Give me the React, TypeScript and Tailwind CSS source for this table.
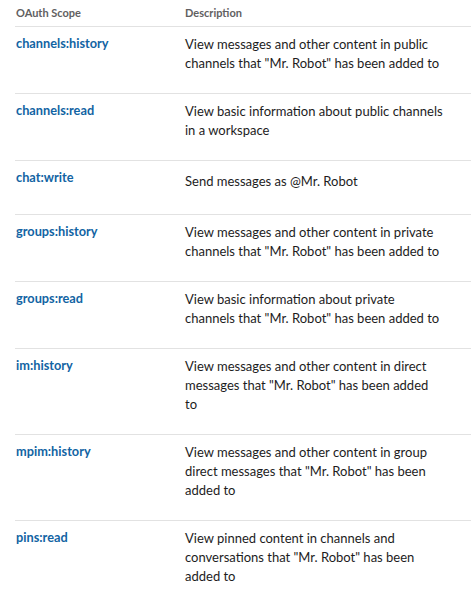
import React from "react";

const scopes = [
  { name: "channels:history", desc: 'View messages and other content in public channels that "Mr. Robot" has been added to' },
  { name: "channels:read", desc: "View basic information about public channels in a workspace" },
  { name: "chat:write", desc: "Send messages as @Mr. Robot" },
  { name: "groups:history", desc: 'View messages and other content in private channels that "Mr. Robot" has been added to' },
  { name: "groups:read", desc: 'View basic information about private channels that "Mr. Robot" has been added to' },
  { name: "im:history", desc: 'View messages and other content in direct messages that "Mr. Robot" has been added\nto' },
  { name: "mpim:history", desc: 'View messages and other content in group direct messages that "Mr. Robot" has been added to' },
  { name: "pins:read", desc: 'View pinned content in channels and conversations that "Mr. Robot" has been added to' },
];

const App: React.FC = () => {
  return (
    <div className="min-h-screen bg-white pl-[15px] font-['Lato','Liberation_Sans',sans-serif] text-[#1d1c1d]">
      <div className="flex h-[27px] items-center border-b border-[#e2e2e2] text-[11px] font-bold text-[#616061]">
        <div className="w-[170px] pl-px">OAuth Scope</div>
        <div>Description</div>
      </div>
      {scopes.map((s) => (
        <div key={s.name} className="flex min-h-[54px] items-center border-b border-[#e2e2e2]">
          <div className="w-[170px] self-start pl-px pt-[7px] text-[12.75px] font-bold leading-[19px] text-[#1264a3]">
            {s.name}
          </div>
          <div className="w-[262px] whitespace-pre-line pt-[8px] pb-[20px] text-[13px] leading-[19px]">{s.desc}</div>
        </div>
      ))}
    </div>
  );
};

export default App;
